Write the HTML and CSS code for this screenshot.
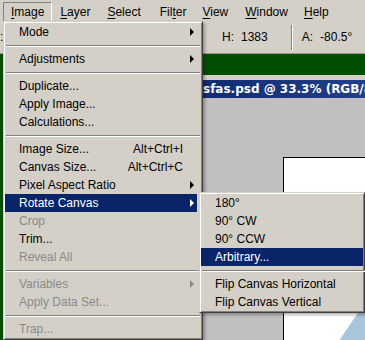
FILE: index.html
```html
<!DOCTYPE html>
<html lang="en">
<head>
    <meta charset="UTF-8">
    <title>Image menu - Rotate Canvas</title>
    <link rel="stylesheet" href="styles.css">
</head>
<body>
    <div class="screen">
        <nav class="menubar">
            <span class="menubar-item is-open"><u>I</u>mage</span>
            <span class="menubar-item"><u>L</u>ayer</span>
            <span class="menubar-item"><u>S</u>elect</span>
            <span class="menubar-item">Fil<u>t</u>er</span>
            <span class="menubar-item"><u>V</u>iew</span>
            <span class="menubar-item"><u>W</u>indow</span>
            <span class="menubar-item"><u>H</u>elp</span>
        </nav>

        <div class="options">
            <span class="opt-cut">:</span>
            <span class="opt-label">H:</span><span class="opt-value">1383</span>
            <span class="opt-sep"></span>
            <span class="opt-label">A:</span><span class="opt-value">-80.5°</span>
        </div>

        <div class="workspace">
            <div class="docwin">
                <div class="doc-title">sfas.psd @ 33.3% (RGB/8)</div>
                <div class="doc-body">
                    <div class="canvas">
                        <svg class="canvas-art" width="81" height="190" viewBox="0 0 81 190">
                            <polygon points="80,146 82,146 82,190 50,190" fill="#a8c5da"/>
                        </svg>
                    </div>
                </div>
            </div>
        </div>

        <!-- Image menu -->
        <ul class="menu menu-image">
            <li class="item has-sub">Mode</li>
            <li class="sep"></li>
            <li class="item has-sub">Adjustments</li>
            <li class="sep"></li>
            <li class="item">Duplicate...</li>
            <li class="item">Apply Image...</li>
            <li class="item">Calculations...</li>
            <li class="sep"></li>
            <li class="item"><span class="label">Image Size...</span><span class="key">Alt+Ctrl+I</span></li>
            <li class="item"><span class="label">Canvas Size...</span><span class="key">Alt+Ctrl+C</span></li>
            <li class="item has-sub">Pixel Aspect Ratio</li>
            <li class="item has-sub active">Rotate Canvas</li>
            <li class="item disabled">Crop</li>
            <li class="item">Trim...</li>
            <li class="item disabled">Reveal All</li>
            <li class="sep"></li>
            <li class="item has-sub disabled">Variables</li>
            <li class="item disabled">Apply Data Set...</li>
            <li class="sep"></li>
            <li class="item disabled">Trap...</li>
        </ul>

        <!-- Rotate Canvas submenu -->
        <ul class="menu menu-rotate">
            <li class="item">180°</li>
            <li class="item">90° CW</li>
            <li class="item">90° CCW</li>
            <li class="item active">Arbitrary...</li>
            <li class="sep"></li>
            <li class="item">Flip Canvas Horizontal</li>
            <li class="item">Flip Canvas Vertical</li>
        </ul>
    </div>
</body>
</html>
```

FILE: styles.css
```css
body { margin: 0; padding: 0; font-family: "Liberation Sans", Arial, sans-serif; font-size: 12px; color: #000; }
.screen { position: relative; width: 365px; height: 340px; overflow: hidden; background: #024f02; }

/* menu bar */
.menubar { display: flex; height: 21px; padding-left: 3px; background: #d4d0c8; box-sizing: border-box; }
.menubar-item { height: 18px; margin-top: 2px; padding: 0 7px; line-height: 18px; border: 1px solid transparent; }
.menubar-item.is-open { border-color: #808080 #fff #fff #808080; }
.menubar-item:nth-child(3) { margin-left: 1px; }
.menubar-item:nth-child(4) { margin-left: 3px; }
.menubar-item:nth-child(6) { margin-left: 1px; }
u { text-decoration: underline; text-underline-offset: 2px; }

/* options bar */
.options { display: flex; align-items: center; height: 32px; background: #d4d0c8; border-bottom: 1px solid #9a968e; }
.options > * { flex-shrink: 0; }
.opt-cut { width: 222px; }
.opt-label { margin-right: 7px; }
.opt-value { margin-right: 23px; }
.opt-value:last-child { margin-right: 0; }
.opt-sep { width: 1px; height: 25px; margin-right: 9px; background: #808080; border-right: 1px solid #fff; }

/* workspace + document window */
.workspace { padding-top: 21px; }
.docwin { margin-left: 4px; border-top: 5px solid #d4d0c8; }
.doc-title { height: 18px; padding-left: 199px; line-height: 18px; white-space: nowrap; overflow: hidden; color: #fff; font-family: "DejaVu Sans", sans-serif; font-weight: bold; font-size: 12px; background: linear-gradient(90deg, #0a246a 40%, #22408a 100%); }
.doc-body { height: 260px; padding: 59px 0 0 279px; background: #c0c0c0; box-sizing: border-box; }
.canvas { height: 200px; background: #fff; border-left: 1px solid #000; border-top: 1px solid #000; }
.canvas-art { display: block; }

/* popup menus */
.menu { position: absolute; margin: 0; padding: 1px 5px 1px 1px; list-style: none; background: #d4d0c8; box-sizing: border-box; border: 1px solid; border-color: #d4d0c8 #404040 #404040 #d4d0c8; box-shadow: inset 1px 1px #fff, inset -1px -1px #808080, 2px 2px 3px rgba(0, 0, 0, 0.3); }
.menu-image { left: 3px; top: 21px; width: 200px; }
.menu-rotate { left: 199px; top: 192px; width: 166px; padding-right: 1px; }
.item { display: flex; align-items: center; height: 18px; padding: 0 3px 0 14px; white-space: nowrap; }
.item .label { flex: 1; }
.item .key { margin-right: 11px; }
.item.has-sub::after { content: ""; margin-left: auto; border-left: 4px solid #000; border-top: 4px solid transparent; border-bottom: 4px solid transparent; }
.item.active { background: #0a246a; color: #fff; }
.item.active::after { border-left-color: #fff; }
.item.disabled { color: #8a8a8a; }
.item.disabled::after { border-left-color: #8a8a8a; }
.sep { height: 9px; margin: 0 -3px 0 1px; position: relative; }
.sep::before { content: ""; position: absolute; left: 0; right: 0; top: 4px; border-top: 1px solid #808080; border-bottom: 1px solid #fff; }
```
